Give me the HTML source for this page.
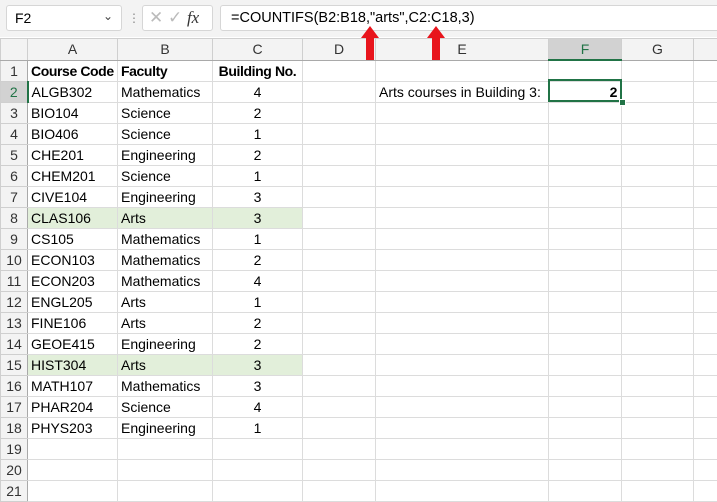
<!DOCTYPE html><html><head><style>
body{margin:0;width:717px;height:491px;background:#fff;font-family:"Liberation Sans",sans-serif;overflow:hidden;position:relative}
.a{position:absolute}
.top{left:0;top:0;width:717px;height:37px;background:#f3f3f3}
.box{background:#fff;border:1px solid #d6d6d6;border-radius:3px;box-sizing:border-box}
table{position:absolute;left:0;top:38px;border-collapse:collapse;table-layout:fixed;width:733px}
td{height:20px;line-height:20px;border:1px solid #dcdcdc;font-size:14px;padding:0 3px;white-space:nowrap;overflow:visible;color:#000;box-sizing:border-box}
tr{height:21px}
tr.h td{background:#f3f3f3;text-align:center;color:#333;border-color:#cfcfcf;border-bottom:1px solid #a9a9a9}
td.r{background:#f3f3f3;text-align:center;color:#333;border-color:#cfcfcf;border-right:1px solid #a9a9a9;padding:0}
.c{text-align:center}.g{background:#e2efda}.b{font-weight:bold;letter-spacing:-0.4px}
</style></head><body>
<div class="a top"></div>
<div class="a box" style="left:6px;top:5px;width:116px;height:26px;font-size:14px;padding:4px 8px">F2<span style="position:absolute;right:8px;top:3px;font-size:12px;color:#444">&#8964;</span></div>
<div class="a" style="left:128px;top:11px;color:#888;font-size:12px">&#8942;</div>
<div class="a box" style="left:142px;top:5px;width:71px;height:26px;color:#bbb;font-size:17px;padding:2px 6px">&#10005;&nbsp;&#10003; <i style="color:#333;font-family:'Liberation Serif',serif">fx</i></div>
<div class="a box" style="left:220px;top:5px;width:500px;height:26px;font-size:14.5px;padding:4px 10px">=COUNTIFS(B2:B18,"arts",C2:C18,3)</div>
<table>
<colgroup><col style="width:27px"><col style="width:90px"><col style="width:95px"><col style="width:90px"><col style="width:73px"><col style="width:173px"><col style="width:73px"><col style="width:72px"><col style="width:40px"></colgroup>
<tr class="h"><td style="background:#f3f3f3"></td><td>A</td><td>B</td><td>C</td><td>D</td><td>E</td><td style="background:#d2d2d2;border-bottom:2px solid #217346;color:#217346">F</td><td>G</td><td></td></tr>
<tr><td class="r">1</td><td class="b">Course Code</td><td class="b">Faculty</td><td class="b c">Building No.</td><td></td><td></td><td></td><td></td><td></td></tr>
<tr><td class="r" style="border-right:2px solid #217346;color:#217346;background:#d2d2d2">2</td><td>ALGB302</td><td>Mathematics</td><td class="c">4</td><td></td><td>Arts courses in Building 3:</td><td class="b" style="text-align:right;padding-right:4px">2</td><td></td><td></td></tr>
<tr><td class="r">3</td><td>BIO104</td><td>Science</td><td class="c">2</td><td></td><td></td><td></td><td></td><td></td></tr>
<tr><td class="r">4</td><td>BIO406</td><td>Science</td><td class="c">1</td><td></td><td></td><td></td><td></td><td></td></tr>
<tr><td class="r">5</td><td>CHE201</td><td>Engineering</td><td class="c">2</td><td></td><td></td><td></td><td></td><td></td></tr>
<tr><td class="r">6</td><td>CHEM201</td><td>Science</td><td class="c">1</td><td></td><td></td><td></td><td></td><td></td></tr>
<tr><td class="r">7</td><td>CIVE104</td><td>Engineering</td><td class="c">3</td><td></td><td></td><td></td><td></td><td></td></tr>
<tr><td class="r">8</td><td class="g">CLAS106</td><td class="g">Arts</td><td class="c g">3</td><td></td><td></td><td></td><td></td><td></td></tr>
<tr><td class="r">9</td><td>CS105</td><td>Mathematics</td><td class="c">1</td><td></td><td></td><td></td><td></td><td></td></tr>
<tr><td class="r">10</td><td>ECON103</td><td>Mathematics</td><td class="c">2</td><td></td><td></td><td></td><td></td><td></td></tr>
<tr><td class="r">11</td><td>ECON203</td><td>Mathematics</td><td class="c">4</td><td></td><td></td><td></td><td></td><td></td></tr>
<tr><td class="r">12</td><td>ENGL205</td><td>Arts</td><td class="c">1</td><td></td><td></td><td></td><td></td><td></td></tr>
<tr><td class="r">13</td><td>FINE106</td><td>Arts</td><td class="c">2</td><td></td><td></td><td></td><td></td><td></td></tr>
<tr><td class="r">14</td><td>GEOE415</td><td>Engineering</td><td class="c">2</td><td></td><td></td><td></td><td></td><td></td></tr>
<tr><td class="r">15</td><td class="g">HIST304</td><td class="g">Arts</td><td class="c g">3</td><td></td><td></td><td></td><td></td><td></td></tr>
<tr><td class="r">16</td><td>MATH107</td><td>Mathematics</td><td class="c">3</td><td></td><td></td><td></td><td></td><td></td></tr>
<tr><td class="r">17</td><td>PHAR204</td><td>Science</td><td class="c">4</td><td></td><td></td><td></td><td></td><td></td></tr>
<tr><td class="r">18</td><td>PHYS203</td><td>Engineering</td><td class="c">1</td><td></td><td></td><td></td><td></td><td></td></tr>
<tr><td class="r">19</td><td></td><td></td><td></td><td></td><td></td><td></td><td></td><td></td></tr>
<tr><td class="r">20</td><td></td><td></td><td></td><td></td><td></td><td></td><td></td><td></td></tr>
<tr><td class="r">21</td><td></td><td></td><td></td><td></td><td></td><td></td><td></td><td></td></tr>
</table>
<div class="a" style="left:548px;top:79px;width:74px;height:23px;border:2px solid #217346;box-sizing:border-box"></div>
<div class="a" style="left:619px;top:99px;width:5px;height:5px;background:#217346;border:1px solid #fff"></div>
<svg class="a" style="left:360px;top:26px" width="90" height="36"><polygon points="10,0 19,12 14,12 14,34 6,34 6,12 1,12" fill="#e8141c"/><polygon points="76,0 85,12 80,12 80,34 72,34 72,12 67,12" fill="#e8141c"/></svg>
</body></html>
